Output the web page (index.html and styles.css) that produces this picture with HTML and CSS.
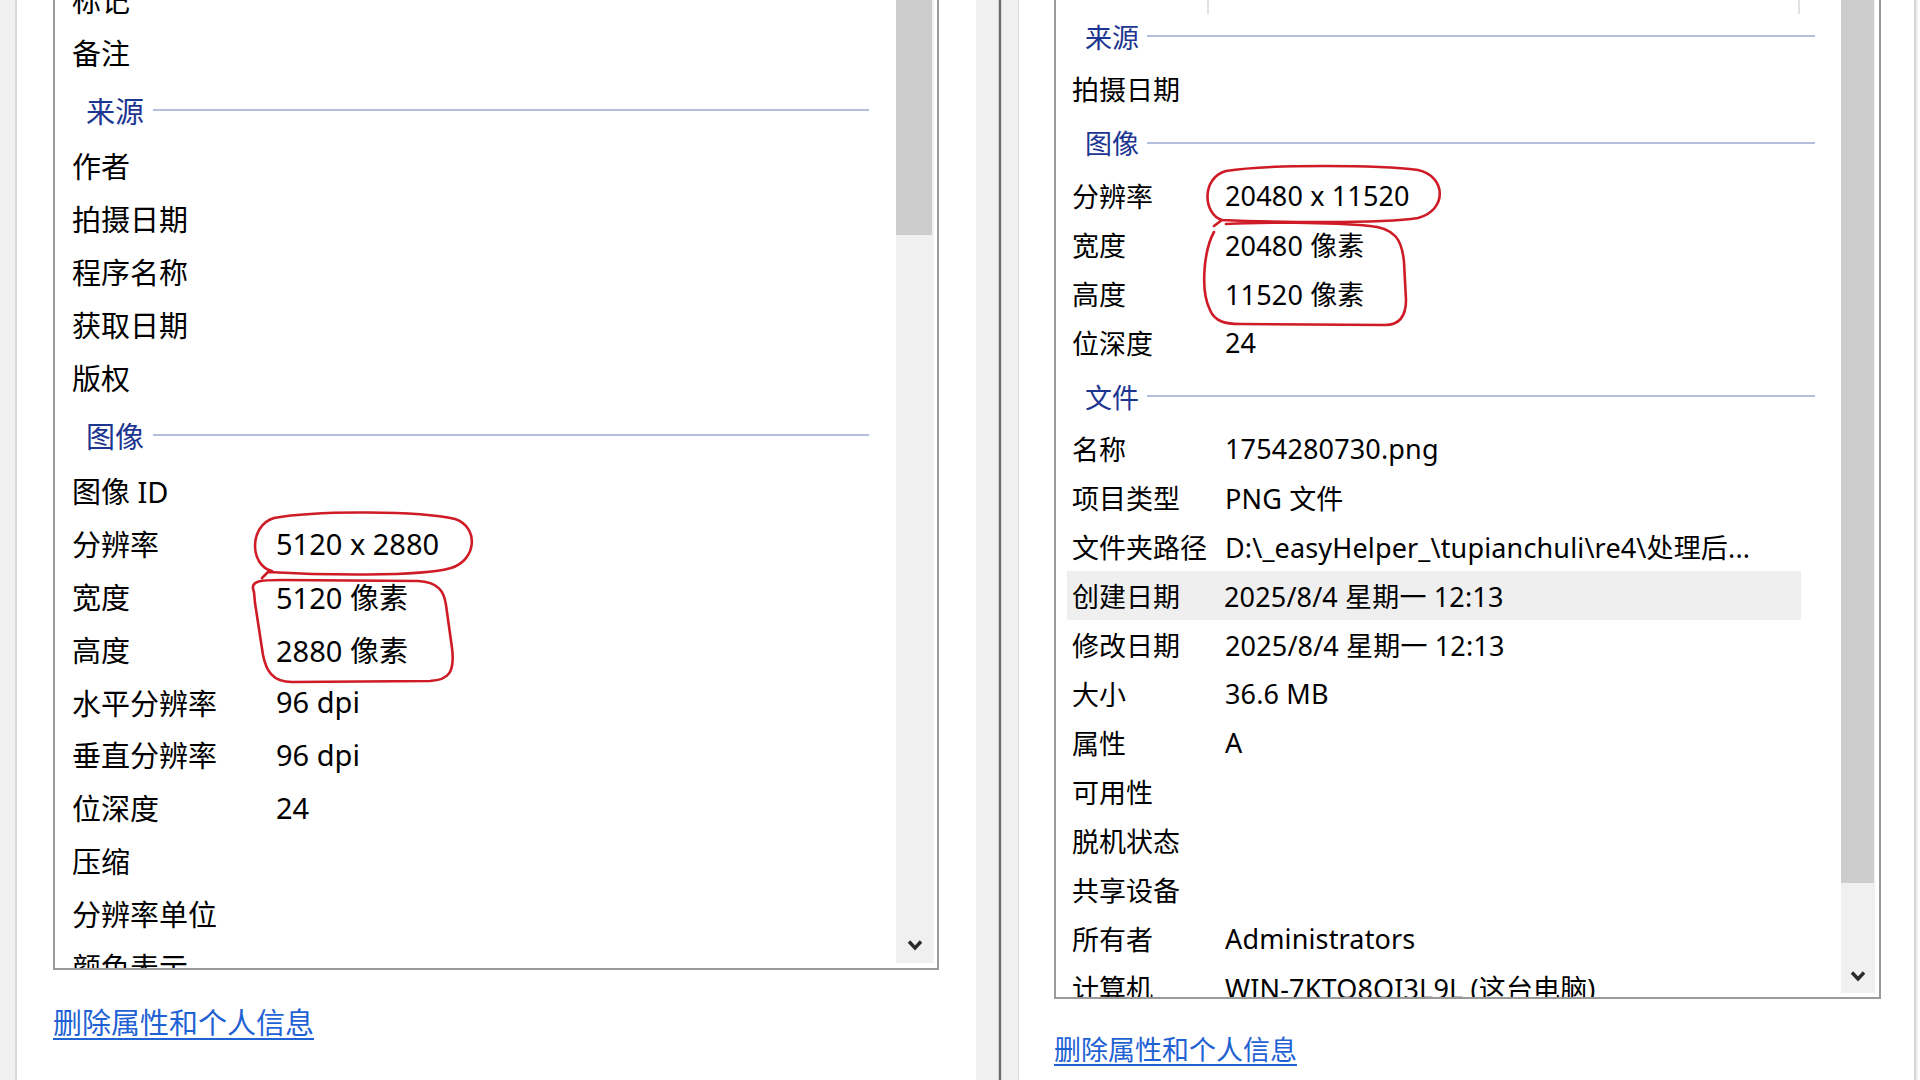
FILE: index.html
```html
<!DOCTYPE html>
<html lang="zh-CN">
<head>
<meta charset="utf-8">
<title>属性 - 详细信息</title>
<link rel="stylesheet" href="styles.css">
</head>
<body>
<div class="win win-left">
  <div class="edge edge-l"></div>
  <div class="pane">
    <div class="listbox">
      <div class="list">
        <div class="rows">
          <div class="row"><span class="lab">标记</span><span class="val"></span></div>
          <div class="row"><span class="lab">备注</span><span class="val"></span></div>
          <div class="grp"><span class="gt">来源</span><span class="gl"></span></div>
          <div class="row"><span class="lab">作者</span><span class="val"></span></div>
          <div class="row"><span class="lab">拍摄日期</span><span class="val"></span></div>
          <div class="row"><span class="lab">程序名称</span><span class="val"></span></div>
          <div class="row"><span class="lab">获取日期</span><span class="val"></span></div>
          <div class="row"><span class="lab">版权</span><span class="val"></span></div>
          <div class="grp"><span class="gt">图像</span><span class="gl"></span></div>
          <div class="row"><span class="lab">图像 ID</span><span class="val"></span></div>
          <div class="row"><span class="lab">分辨率</span><span class="val">5120 x 2880</span></div>
          <div class="row"><span class="lab">宽度</span><span class="val">5120 像素</span></div>
          <div class="row"><span class="lab">高度</span><span class="val">2880 像素</span></div>
          <div class="row"><span class="lab">水平分辨率</span><span class="val">96 dpi</span></div>
          <div class="row"><span class="lab">垂直分辨率</span><span class="val">96 dpi</span></div>
          <div class="row"><span class="lab">位深度</span><span class="val">24</span></div>
          <div class="row"><span class="lab">压缩</span><span class="val"></span></div>
          <div class="row"><span class="lab">分辨率单位</span><span class="val"></span></div>
          <div class="row"><span class="lab">颜色表示</span><span class="val"></span></div>
        </div>
      </div>
      <div class="sbar">
        <div class="thumb"></div>
        <div class="track"></div>
        <div class="arrow"><svg width="16" height="12" viewBox="0 0 16 12"><polyline points="2,2.5 8,9 14,2.5" fill="none" stroke="#2b2b2b" stroke-width="3.4"/></svg></div>
      </div>
    </div>
    <a class="link" href="#">删除属性和个人信息</a>
  </div>
  <div class="edge edge-r"></div>
</div>
<div class="divider"></div>
<div class="win win-right">
  <div class="edge edge-l2"></div>
  <div class="pane pane-r">
    <div class="listbox listbox-r">
      <div class="list">
        <div class="rows">
          <div class="colhead"><span class="cl cl1"></span><span class="cl cl2"></span></div>
          <div class="grp"><span class="gt">来源</span><span class="gl"></span></div>
          <div class="row"><span class="lab">拍摄日期</span><span class="val"></span></div>
          <div class="grp"><span class="gt">图像</span><span class="gl"></span></div>
          <div class="row"><span class="lab">分辨率</span><span class="val">20480 x 11520</span></div>
          <div class="row"><span class="lab">宽度</span><span class="val">20480 像素</span></div>
          <div class="row"><span class="lab">高度</span><span class="val">11520 像素</span></div>
          <div class="row"><span class="lab">位深度</span><span class="val">24</span></div>
          <div class="grp"><span class="gt">文件</span><span class="gl"></span></div>
          <div class="row"><span class="lab">名称</span><span class="val">1754280730.png</span></div>
          <div class="row"><span class="lab">项目类型</span><span class="val">PNG 文件</span></div>
          <div class="row"><span class="lab">文件夹路径</span><span class="val">D:\_easyHelper_\tupianchuli\re4\处理后...</span></div>
          <div class="row sel"><span class="lab">创建日期</span><span class="val">2025/8/4 星期一 12:13</span></div>
          <div class="row"><span class="lab">修改日期</span><span class="val">2025/8/4 星期一 12:13</span></div>
          <div class="row"><span class="lab">大小</span><span class="val">36.6 MB</span></div>
          <div class="row"><span class="lab">属性</span><span class="val">A</span></div>
          <div class="row"><span class="lab">可用性</span><span class="val"></span></div>
          <div class="row"><span class="lab">脱机状态</span><span class="val"></span></div>
          <div class="row"><span class="lab">共享设备</span><span class="val"></span></div>
          <div class="row"><span class="lab">所有者</span><span class="val">Administrators</span></div>
          <div class="row"><span class="lab">计算机</span><span class="val">WIN-7KTO8OI3L9L (这台电脑)</span></div>
        </div>
      </div>
      <div class="sbar sbar-r">
        <div class="thumb"></div>
        <div class="track"></div>
        <div class="arrow"><svg width="16" height="12" viewBox="0 0 16 12"><polyline points="2,2.5 8,9 14,2.5" fill="none" stroke="#2b2b2b" stroke-width="3.4"/></svg></div>
      </div>
    </div>
    <a class="link" href="#">删除属性和个人信息</a>
  </div>
  <div class="edge edge-r2"></div>
</div>
<svg class="marks" width="1920" height="1080" viewBox="0 0 1920 1080">
  <path d="M272 571 C250 566 248 526 274 518 C318 510 420 511 455 519 C479 527 477 560 451 568 C420 577 320 575 268 572 L262 578"/>
  <path d="M254 592 C249 580 262 580 282 580 L418 581 C438 582 444 591 446 605 L452 648 C455 672 449 680 430 681 L292 682 C272 682 266 670 263 655 L255 603 Z"/>
  <path d="M1222 220 C1203 214 1201 178 1226 171 C1270 164 1380 165 1418 170 C1446 176 1448 210 1418 218 C1380 224 1270 222 1222 220 L1214 226"/>
  <path d="M1214 232 C1204 250 1200 290 1210 310 C1215 322 1226 324 1240 324 L1385 325 C1400 325 1406 316 1406 300 L1404 262 C1402 240 1395 228 1370 226 C1330 222 1260 222 1226 224"/>
</svg>
</body>
</html>
```
FILE: styles.css
```css
html, body {
  margin: 0;
  padding: 0;
}
body {
  width: 1920px;
  height: 1080px;
  overflow: hidden;
  display: flex;
  background: #ffffff;
  font-family: "Noto Sans", "Noto Sans CJK SC", sans-serif;
  color: #000;
  position: relative;
}
.win {
  display: flex;
  height: 1080px;
}
.win-left {
  width: 998px;
}
.edge {
  background: #f0f0f0;
  flex: none;
}
.edge-l {
  width: 15px;
  border-right: 2px solid #d9d9d9;
}
.edge-r {
  width: 22px;
}
.divider {
  width: 4px;
  flex: none;
  background: linear-gradient(to right, #d0d0d0 0 1px, #6c6c6c 1px 3px, #dcdcdc 3px 4px);
}
.win-right {
  flex: 1;
}
.edge-l2 {
  width: 16px;
  border-right: 1px solid #dadada;
}
.edge-r2 {
  width: 2px;
  border-left: 2px solid #d6d6d6;
}
.pane {
  flex: none;
  width: 923px;
  padding-left: 36px;
  background: #fff;
  display: flex;
  flex-direction: column;
  align-items: flex-start;
}
.pane-r {
  width: 860px;
  padding-left: 35px;
}
.listbox {
  width: 882px;
  height: 968px;
  border: 2px solid #9a9a9a;
  border-top: none;
  display: flex;
  background: #fff;
}
.listbox-r {
  width: 823px;
  height: 997px;
}
.list {
  width: 841px;
  flex: none;
  overflow: hidden;
  position: relative;
}
.listbox-r .list {
  width: 785px;
}
.rows {
  margin-top: -27.5px;
  font-size: 29px;
}
.listbox-r .rows {
  margin-top: 0;
  font-size: 27px;
}
.row {
  display: flex;
  align-items: center;
  height: 52.8px;
  padding-left: 17px;
  white-space: nowrap;
}
.lab {
  width: 204px;
  flex: none;
}
.val {
  flex: none;
}
.grp {
  display: flex;
  align-items: center;
  height: 61px;
  padding-left: 31px;
  padding-top: 2px;
  box-sizing: border-box;
  margin-right: 27px;
}
.gt {
  color: #1c3590;
  flex: none;
}
.gl {
  flex: 1;
  height: 2px;
  background: #b3bfdd;
  margin-left: 9px;
}
.listbox-r .row {
  height: 49px;
  padding-left: 0;
  margin-left: 12px;
  width: 732px;
}
.listbox-r .lab {
  width: 137px;
  padding-left: 4px;
}
.listbox-r .val {
  padding-left: 16px;
  letter-spacing: 0.15px;
}
.listbox-r .grp {
  height: 57.5px;
  padding-left: 29px;
  margin-right: 26px;
}
.listbox-r .gl {
  margin-left: 8px;
}
.row.sel {
  background: #efefef;
  margin-left: 11px;
  width: 733px;
  padding-left: 1px;
}
.row.sel .lab {
  width: 136px;
}
.colhead {
  height: 6.5px;
  position: relative;
  display: flex;
  align-items: flex-start;
}
.cl {
  display: block;
  width: 2px;
  height: 14px;
  background: #e2e2e2;
  flex: none;
}
.cl1 {
  margin-left: 151px;
}
.cl2 {
  margin-left: 589px;
}
.sbar {
  width: 38px;
  flex: none;
  margin-bottom: 5px;
  display: flex;
  flex-direction: column;
  background: #f0f0f0;
}
.sbar-r {
  width: 34px;
  margin-left: 0;
  margin-bottom: 4px;
}
.thumb {
  height: 235px;
  background: #cdcdcd;
  margin-right: 2px;
}
.sbar-r .thumb {
  height: 883px;
  margin-right: 1px;
}
.track {
  flex: 1;
}
.arrow {
  height: 36px;
  display: flex;
  align-items: center;
  justify-content: center;
}
.sbar-r .arrow {
  height: 34px;
}
.link {
  margin-top: 33px;
  font-size: 29px;
  line-height: 40px;
  color: #1f62d4;
  text-decoration: underline;
  text-underline-offset: 4px;
}
.pane-r .link {
  margin-top: 32px;
  font-size: 27px;
  line-height: 38px;
}
.marks {
  position: absolute;
  left: 0;
  top: 0;
  pointer-events: none;
  fill: none;
  stroke: #cf1b26;
  stroke-width: 2.6;
  stroke-linecap: round;
  stroke-linejoin: round;
}
```
